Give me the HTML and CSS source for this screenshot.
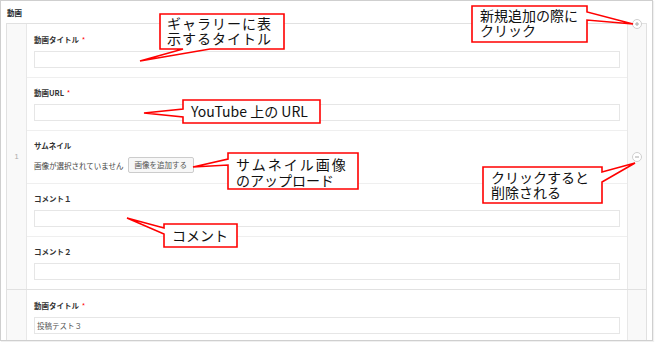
FILE: index.html
```html
<!DOCTYPE html>
<html lang="ja">
<head>
<meta charset="utf-8">
<title>動画</title>
<link rel="stylesheet" href="styles.css">
</head>
<body>
<div class="page">
  <div class="frame">
    <div class="section-label">動画</div>
    <div class="repeater">
      <div class="row">
        <div class="handle order"><span class="num">1</span></div>
        <div class="fields">
          <div class="field">
            <div class="label">動画タイトル <span class="req">*</span></div>
            <div class="input"></div>
          </div>
          <div class="field">
            <div class="label">動画URL <span class="req">*</span></div>
            <div class="input"></div>
          </div>
          <div class="field">
            <div class="label">サムネイル</div>
            <div class="image-row">
              <span class="no-image">画像が選択されていません</span>
              <span class="button">画像を追加する</span>
            </div>
          </div>
          <div class="field">
            <div class="label">コメント１</div>
            <div class="input"></div>
          </div>
          <div class="field">
            <div class="label">コメント２</div>
            <div class="input"></div>
          </div>
        </div>
        <div class="handle actions">
          <span class="icon icon-plus"><svg width="10" height="10" viewBox="0 0 10 10"><circle cx="5" cy="5" r="4.5" fill="#fff" stroke="#cfcfcf"/><path d="M5 3v4M3 5h4" stroke="#a8a8a8" stroke-width="1"/></svg></span>
          <span class="icon icon-minus"><svg width="10" height="10" viewBox="0 0 10 10"><circle cx="5" cy="5" r="4.5" fill="#fff" stroke="#cfcfcf"/><path d="M3 5h4" stroke="#a8a8a8" stroke-width="1"/></svg></span>
        </div>
      </div>
      <div class="row row-next">
        <div class="handle order"></div>
        <div class="fields">
          <div class="field">
            <div class="label">動画タイトル <span class="req">*</span></div>
            <div class="input">投稿テスト３</div>
          </div>
        </div>
        <div class="handle actions"></div>
      </div>
    </div>
  </div>

  <svg class="callouts" width="655" height="342" viewBox="0 0 655 342">
    <g fill="#fff" stroke="#ff0000" stroke-width="1.6" stroke-linejoin="miter">
      <polygon points="160,14 284,14 284,49 210,49 140,61 183,49 160,49"/>
      <polygon points="472,6 587,6 587,12 633,24 587,20 587,42 472,42"/>
      <polygon points="183,100 320,100 320,123 183,123 183,117 144,113 183,109"/>
      <polygon points="228,153 358,153 358,189 228,189 228,165 193,167 228,159"/>
      <polygon points="483,167 602,167 602,172 635,163 602,182 602,203 483,203"/>
      <polygon points="164,224 237,224 237,247 164,247 164,234 127,218 164,228"/>
    </g>
  </svg>
  <div class="note note-gallery">ギャラリーに表<br>示するタイトル</div>
  <div class="note note-add">新規追加の際に<br>クリック</div>
  <div class="note note-url">YouTube 上の URL</div>
  <div class="note note-thumb"><span class="wide">サムネイル画像</span><br>のアップロード</div>
  <div class="note note-remove">クリックすると<br>削除される</div>
  <div class="note note-comment">コメント</div>
</div>
</body>
</html>
```

FILE: styles.css
```css
* { box-sizing: border-box; }

html, body {
  margin: 0;
  padding: 0;
  background: #ffffff;
}

body {
  font-family: "Noto Sans CJK JP", "Noto Sans", sans-serif;
  color: #333;
}

.page {
  position: relative;
  width: 655px;
  height: 342px;
  overflow: hidden;
}

.frame {
  width: 653px;
  height: 341px;
  border: 1px solid #cfcfcf;
  background: #fff;
  padding: 6px 5px 0 5px;
  overflow: hidden;
  box-shadow: 1px 1px 1px rgba(0, 0, 0, 0.06);
}

.section-label {
  font-size: 7.5px;
  line-height: 12px;
  font-weight: 700;
  color: #23282d;
  margin-bottom: 4px;
  padding-left: 1px;
}

.repeater {
  border: 1px solid #e1e1e1;
}

.row {
  display: flex;
}

.row + .row {
  border-top: 1px solid #e1e1e1;
}

.row-next {
  height: 60px;
}

.handle {
  background: #f9f9f9;
  flex: none;
  position: relative;
}

.order {
  width: 20px;
  border-right: 1px solid #e8e8e8;
  display: flex;
  align-items: center;
  justify-content: center;
}

.num {
  font-size: 7.5px;
  color: #aaa;
  font-family: "Liberation Sans", sans-serif;
}

.actions {
  width: 19px;
  border-left: 1px solid #e8e8e8;
  display: flex;
  align-items: center;
  justify-content: center;
}

.fields {
  flex: 1;
  background: #fff;
}

.field {
  padding: 9px 7px 9px 7px;
}

.field:first-child {
  padding-top: 10px;
}

.field + .field {
  border-top: 1px solid #efefef;
}

.label {
  font-size: 7.5px;
  line-height: 12px;
  font-weight: 700;
  color: #333;
  margin-bottom: 5px;
}

.req {
  color: #f00;
  font-weight: 400;
  margin-left: 1px;
}

.input {
  height: 17px;
  border: 1px solid #e6e6e6;
  background: #fff;
  font-size: 7.5px;
  line-height: 15px;
  padding-left: 2px;
  color: #555;
}

.image-row {
  display: flex;
  align-items: center;
  height: 17px;
  gap: 4px;
}

.no-image {
  font-size: 7.5px;
  color: #444;
  line-height: 12px;
}

.button {
  height: 16px;
  margin-top: -1px;
  padding: 0 6px;
  border: 1px solid #cccccc;
  border-radius: 2px;
  background: #f7f7f7;
  font-size: 7.5px;
  line-height: 14px;
  color: #555;
}

.icon {
  display: block;
  width: 10px;
  height: 10px;
  line-height: 0;
}

.icon-plus {
  position: absolute;
  top: -5px;
  left: 4px;
}

.callouts {
  position: absolute;
  left: 0;
  top: 0;
  pointer-events: none;
}

.note {
  position: absolute;
  font-family: "Noto Sans CJK JP", sans-serif;
  font-size: 14px;
  line-height: 15px;
  color: #111;
  white-space: nowrap;
}

.note-gallery { left: 167px; top: 16px; letter-spacing: 1px; }
.note-add { left: 480px; top: 8px; }
.note-url { left: 191px; top: 104px; }
.note-thumb { left: 236px; top: 156px; line-height: 16px; }
.note-thumb .wide { letter-spacing: 2px; }
.note-remove { left: 491px; top: 170px; }
.note-comment { left: 172px; top: 228px; }
```
